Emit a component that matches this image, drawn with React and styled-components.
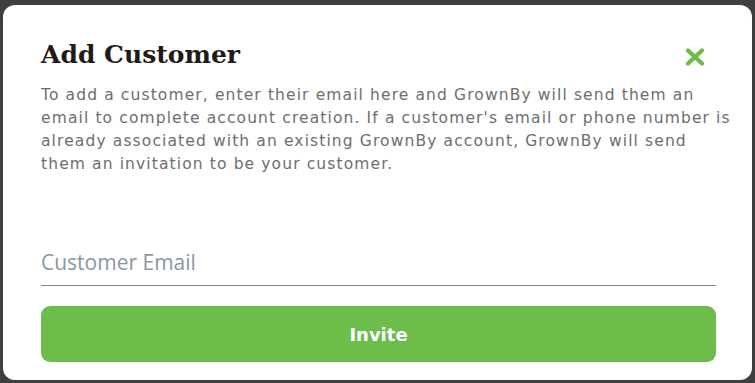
import React from "react";
import styled, { createGlobalStyle } from "styled-components";

const GlobalStyle = createGlobalStyle`
  html, body {
    margin: 0;
    padding: 0;
    background-color: #3f3f3f;
  }
  * {
    box-sizing: border-box;
  }
`;

const lines = [
  "To add a customer, enter their email here and GrownBy will send them an",
  "email to complete account creation. If a customer's email or phone number is",
  "already associated with an existing GrownBy account, GrownBy will send",
  "them an invitation to be your customer.",
];

const AddCustomerModal = () => {
  return (
    <Backdrop>
      <GlobalStyle />
      <Modal>
        <Header>
          <Title>Add Customer</Title>
          <CloseButton aria-label="Close">
            <svg width="20" height="18" viewBox="0 0 20 18">
              <path
                d="M3 2.5 L17 15.5 M17 2.5 L3 15.5"
                stroke="#6cbd4a"
                strokeWidth="4.2"
                strokeLinecap="round"
                fill="none"
              />
            </svg>
          </CloseButton>
        </Header>
        <Description>
          {lines.map((line) => (
            <Line key={line}>{line}</Line>
          ))}
        </Description>
        <EmailInput type="email" placeholder="Customer Email" />
        <InviteButton>Invite</InviteButton>
      </Modal>
    </Backdrop>
  );
};

// Styled Components

const Backdrop = styled.div`
  height: 100vh;
  padding: 5px 3px 3px 3px;
  display: flex;
  background-color: #3f3f3f;
`;

const Modal = styled.div`
  flex: 1;
  min-width: 0;
  display: flex;
  flex-direction: column;
  background-color: #ffffff;
  border-radius: 12px;
  padding: 35px 36px 18px 38px;
`;

const Header = styled.div`
  display: flex;
  justify-content: space-between;
  align-items: center;
`;

const Title = styled.h2`
  margin: 0;
  font-family: "DejaVu Serif", "Liberation Serif", serif;
  font-weight: 700;
  font-size: 25px;
  line-height: 30px;
  color: #1e1b18;
`;

const CloseButton = styled.button`
  display: flex;
  padding: 3px 11px 0 0;
  border: none;
  background: none;
  cursor: pointer;
`;

const Description = styled.p`
  margin: 14px 0 0 0;
  font-family: "DejaVu Sans", "Noto Sans", sans-serif;
  font-size: 15.5px;
  letter-spacing: 1.12px;
  line-height: 23px;
  color: #6e6e6e;
  white-space: nowrap;
`;

const Line = styled.span`
  display: block;
`;

const EmailInput = styled.input`
  margin-top: 68px;
  height: 42px;
  padding: 0 0 5px 0;
  border: none;
  border-bottom: 1px solid #7f8c99;
  font-family: "Open Sans", "Noto Sans", sans-serif;
  font-size: 21px;
  color: #333;
  outline: none;

  &::placeholder {
    color: #8a97a5;
  }
`;

const InviteButton = styled.button`
  margin-top: 20px;
  height: 56px;
  border: none;
  border-radius: 9px;
  background-color: #6cbd4a;
  color: #ffffff;
  font-family: "DejaVu Sans", "Noto Sans", sans-serif;
  font-weight: 700;
  font-size: 18px;
  cursor: pointer;
`;

export default AddCustomerModal;
